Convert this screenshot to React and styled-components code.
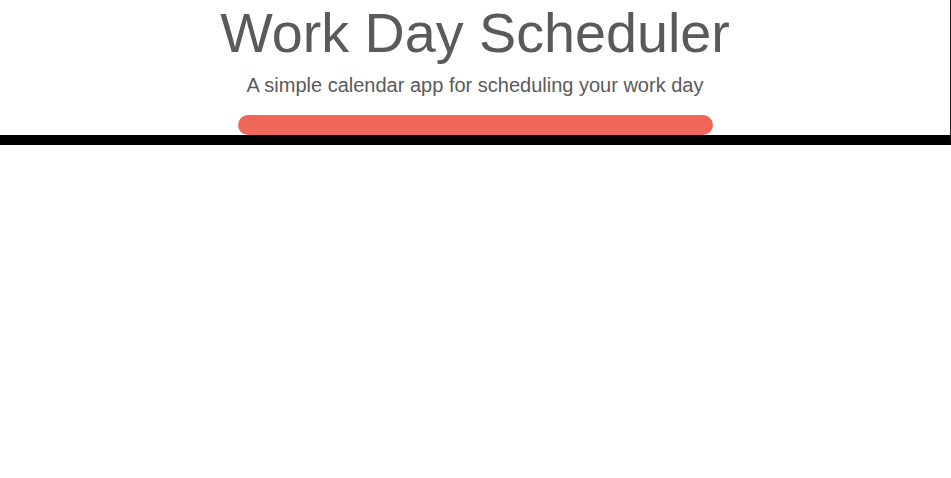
import React from "react";
import styled, { createGlobalStyle } from "styled-components";

const GlobalStyle = createGlobalStyle`
  html, body {
    margin: 0;
    padding: 0;
    background: #ffffff;
  }
  body {
    font-family: "Liberation Sans", Arial, sans-serif;
  }
`;

const Header = styled.header`
  display: flex;
  flex-direction: column;
  align-items: center;
  text-align: center;
  color: #5a5a5a;
  border-bottom: 10px solid #000;
  border-right: 1px solid #222;
`;

const Title = styled.h1`
  margin: 0;
  font-size: 55.7px;
  font-weight: 400;
  line-height: 1.2;
`;

const Lead = styled.p`
  margin: 3px 0 15px;
  font-size: 20px;
  font-weight: 400;
  line-height: 1.5;
`;

const CurrentDay = styled.p`
  margin: 0;
  width: 50%;
  height: 20px;
  border-radius: 10px;
  background: #f0675a;
`;

export default function App() {
  return (
    <>
      <GlobalStyle />
      <Header>
        <Title>Work Day Scheduler</Title>
        <Lead>A simple calendar app for scheduling your work day</Lead>
        <CurrentDay id="currentDay" />
      </Header>
    </>
  );
}
